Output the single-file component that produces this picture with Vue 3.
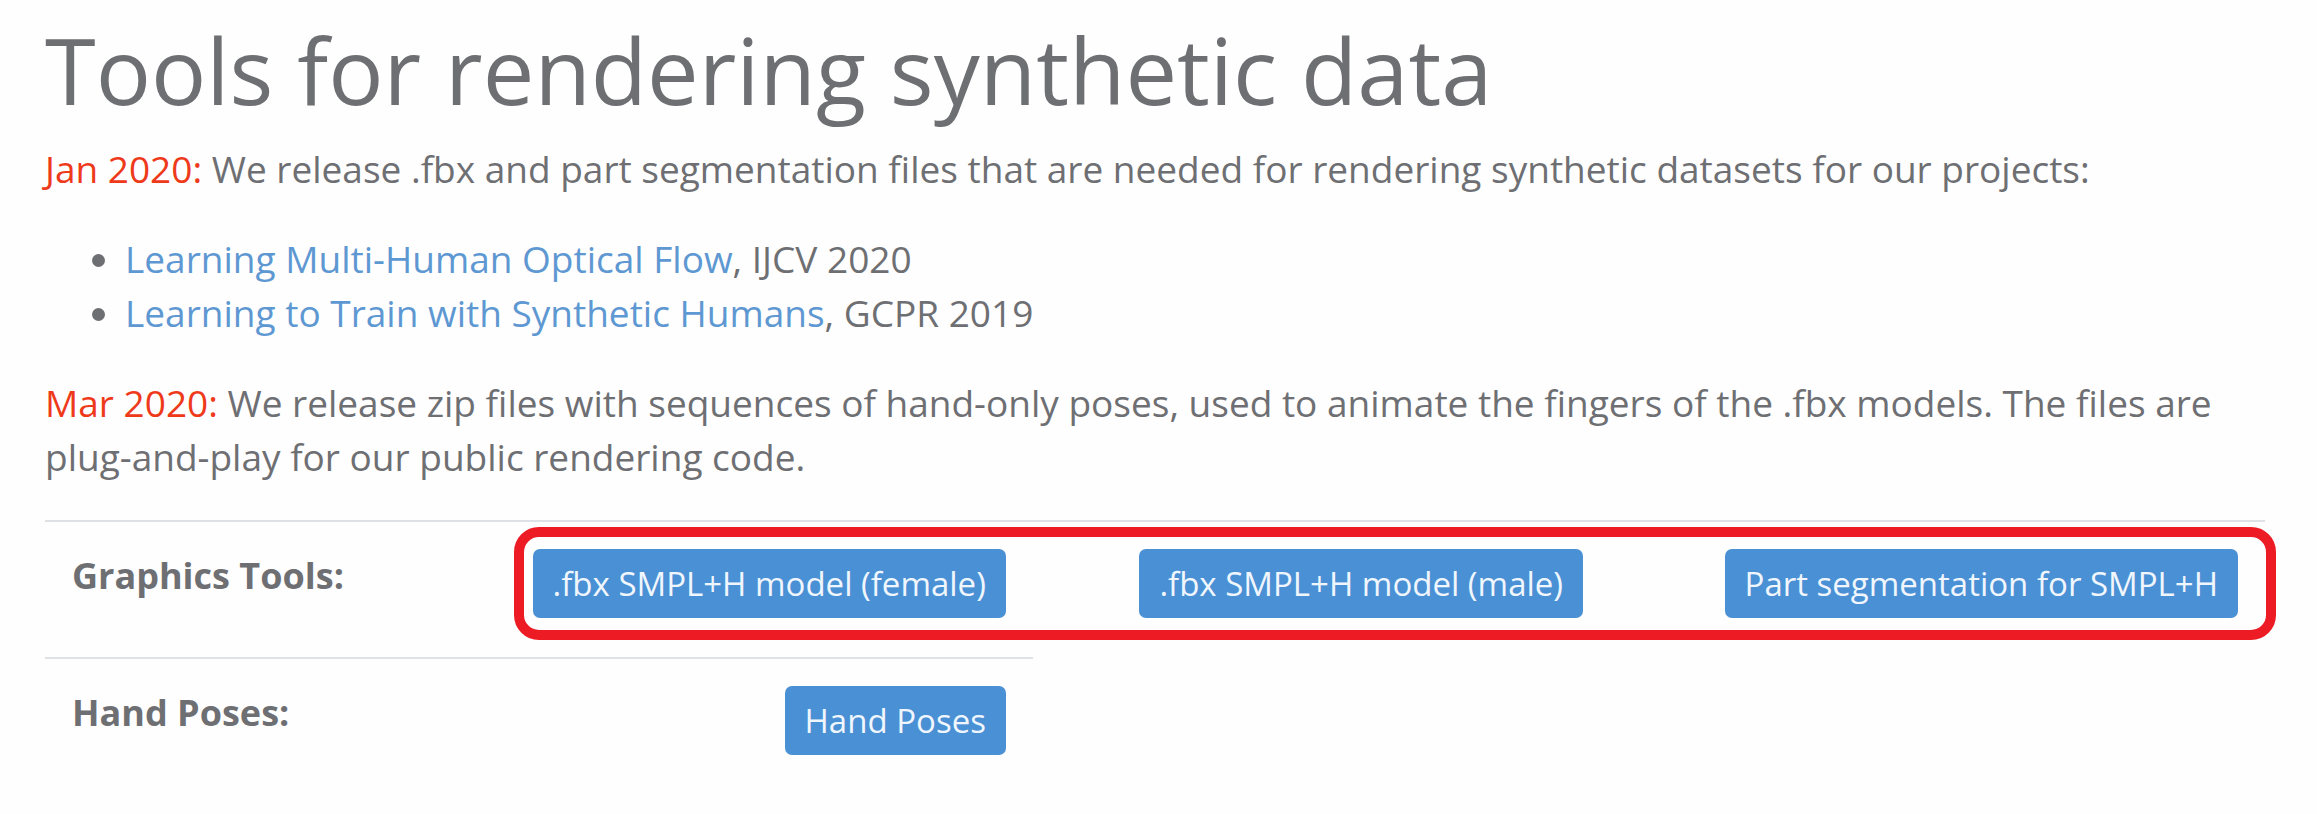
<script setup>
const papers = [
  { title: 'Learning Multi-Human Optical Flow', venue: 'IJCV 2020' },
  { title: 'Learning to Train with Synthetic Humans', venue: 'GCPR 2019' },
]
const tools = ['.fbx SMPL+H model (female)', '.fbx SMPL+H model (male)', 'Part segmentation for SMPL+H']
</script>

<template>
  <main class="page">
    <h1>Tools for rendering synthetic data</h1>
    <p><span class="date">Jan 2020:</span> We release .fbx and part segmentation files that are needed for rendering synthetic datasets for our projects:</p>
    <ul>
      <li v-for="paper in papers" :key="paper.title"><a href="#">{{ paper.title }}</a>, {{ paper.venue }}</li>
    </ul>
    <p><span class="date">Mar 2020:</span> We release zip files with sequences of hand-only poses, used to animate the fingers of the .fbx models. The files are plug-and-play for our public rendering code.</p>
    <table>
      <colgroup>
        <col class="col-label" />
        <col class="col-first" />
        <col class="col-second" />
        <col class="col-third" />
      </colgroup>
      <tbody>
        <tr class="marked">
          <th scope="row">Graphics Tools:</th>
          <td v-for="(tool, i) in tools" :key="tool">
            <button type="button">{{ tool }}</button>
            <span v-if="i === tools.length - 1" class="marker" aria-hidden="true"></span>
          </td>
        </tr>
        <tr>
          <th scope="row">Hand Poses:</th>
          <td><button type="button">Hand Poses</button></td>
        </tr>
      </tbody>
    </table>
  </main>
</template>

<style>
body {
  margin: 0;
  background: #fefefe;
}
</style>

<style scoped>
.page {
  padding: 12px 52px 0 45px;
  color: #6e6f73;
  font-family: "Open Sans", "Noto Sans", sans-serif;
  font-size: 37px;
  line-height: 54px;
}
h1 {
  margin: 0 0 14px;
  font-size: 92px;
  font-weight: 400;
  line-height: 116px;
}
p {
  margin: 0 0 36px;
}
ul {
  margin: 0 0 36px;
  padding-left: 80px;
}
.date {
  color: #ee3a1a;
}
a {
  color: #5e98d2;
  text-decoration: none;
}
table {
  width: 100%;
  table-layout: fixed;
  border-collapse: separate;
  border-spacing: 0;
}
.col-label {
  width: 20%;
}
.col-first {
  width: 24.5%;
}
.col-second {
  width: 26%;
}
.col-third {
  width: 29.5%;
}
th,
td {
  padding: 27px 27px 39px;
  border-top: 2px solid #dee2e6;
  vertical-align: top;
  white-space: nowrap;
}
th {
  font-size: 36px;
  font-weight: 700;
  text-align: left;
}
td {
  text-align: right;
}
button {
  display: block;
  margin-left: auto;
  padding: 10px 20px;
  border: 0;
  border-radius: 7px;
  background: #4a90d4;
  color: #f0f6fd;
  font: inherit;
  font-size: 33px;
  line-height: 49px;
  white-space: nowrap;
}
.marked {
  position: relative;
}
.marker {
  position: absolute;
  top: 7px;
  right: -11px;
  bottom: 17px;
  left: calc(20% + 25px);
  box-sizing: border-box;
  border: 10px solid #ed1c24;
  border-radius: 25px;
  pointer-events: none;
}
</style>
